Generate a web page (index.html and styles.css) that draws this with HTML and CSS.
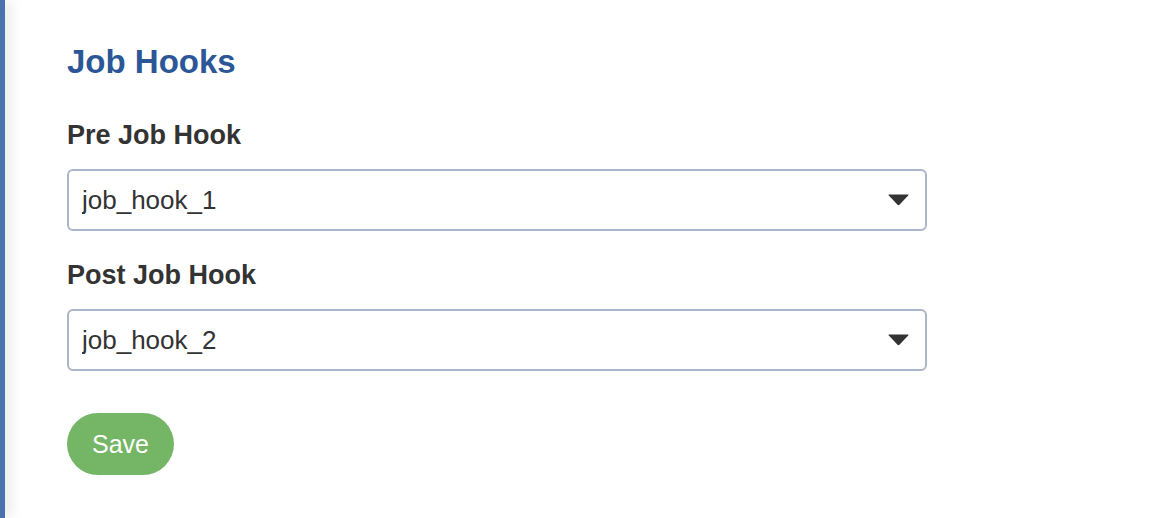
FILE: index.html
```html
<!DOCTYPE html>
<html lang="en">
<head>
    <meta charset="UTF-8">
    <meta name="viewport" content="width=device-width, initial-scale=1.0">
    <title>Job Hooks</title>
    <link rel="stylesheet" href="styles.css">
</head>
<body>
    <div class="page">
        <div class="rail"></div>
        <main class="panel">
            <h2 class="title">Job Hooks</h2>
            <form name="frm" class="hooks-form">
                <div class="field">
                    <label for="prehook">Pre Job Hook</label>
                    <div class="select-box">
                        <select id="prehook" name="prehook">
                            <option>job_hook_1</option>
                            <option>job_hook_2</option>
                        </select>
                        <svg class="caret" width="21" height="12" viewBox="0 0 21 12"><path d="M1 0.5 H20 Q21 0.5 20.2 1.5 L11.7 10.6 Q10.5 11.8 9.3 10.6 L0.8 1.5 Q0 0.5 1 0.5 Z" fill="#333"/></svg>
                    </div>
                </div>
                <div class="field">
                    <label for="posthook">Post Job Hook</label>
                    <div class="select-box">
                        <select id="posthook" name="posthook">
                            <option>job_hook_1</option>
                            <option selected>job_hook_2</option>
                        </select>
                        <svg class="caret" width="21" height="12" viewBox="0 0 21 12"><path d="M1 0.5 H20 Q21 0.5 20.2 1.5 L11.7 10.6 Q10.5 11.8 9.3 10.6 L0.8 1.5 Q0 0.5 1 0.5 Z" fill="#333"/></svg>
                    </div>
                </div>
                <button type="submit" class="save">Save</button>
            </form>
        </main>
    </div>
</body>
</html>
```

FILE: styles.css
```css
body {
    margin: 0;
    font-family: "Liberation Sans", Arial, sans-serif;
    background: #fff;
}
.page {
    display: flex;
    height: 518px;
}
.rail {
    width: 5px;
    background-color: #4a72b0;
    box-shadow: 3px 0 14px rgba(0, 0, 0, 0.2);
}
.panel {
    flex: 1;
    padding: 42px 0 0 62px;
}
.title {
    margin: 0 0 37px;
    font-size: 33px;
    line-height: 40px;
    color: #2b5797;
}
.field {
    margin-bottom: 28px;
}
label {
    display: block;
    margin-bottom: 18px;
    font-size: 27px;
    line-height: 32px;
    font-weight: bold;
    color: #333;
}
.select-box {
    position: relative;
    width: 860px;
}
select {
    appearance: none;
    -webkit-appearance: none;
    width: 100%;
    height: 62px;
    padding: 0 60px 0 13px;
    border: 2px solid #aab6c8;
    border-radius: 6px;
    background: #fff;
    font-family: inherit;
    font-size: 26px;
    color: #333;
}
.caret {
    position: absolute;
    right: 18px;
    top: 25px;
    pointer-events: none;
}
.save {
    margin-top: 14px;
    width: 107px;
    height: 62px;
    border: none;
    border-radius: 31px;
    background-color: #74b666;
    color: #fff;
    font-family: inherit;
    font-size: 25px;
    cursor: pointer;
}
```
